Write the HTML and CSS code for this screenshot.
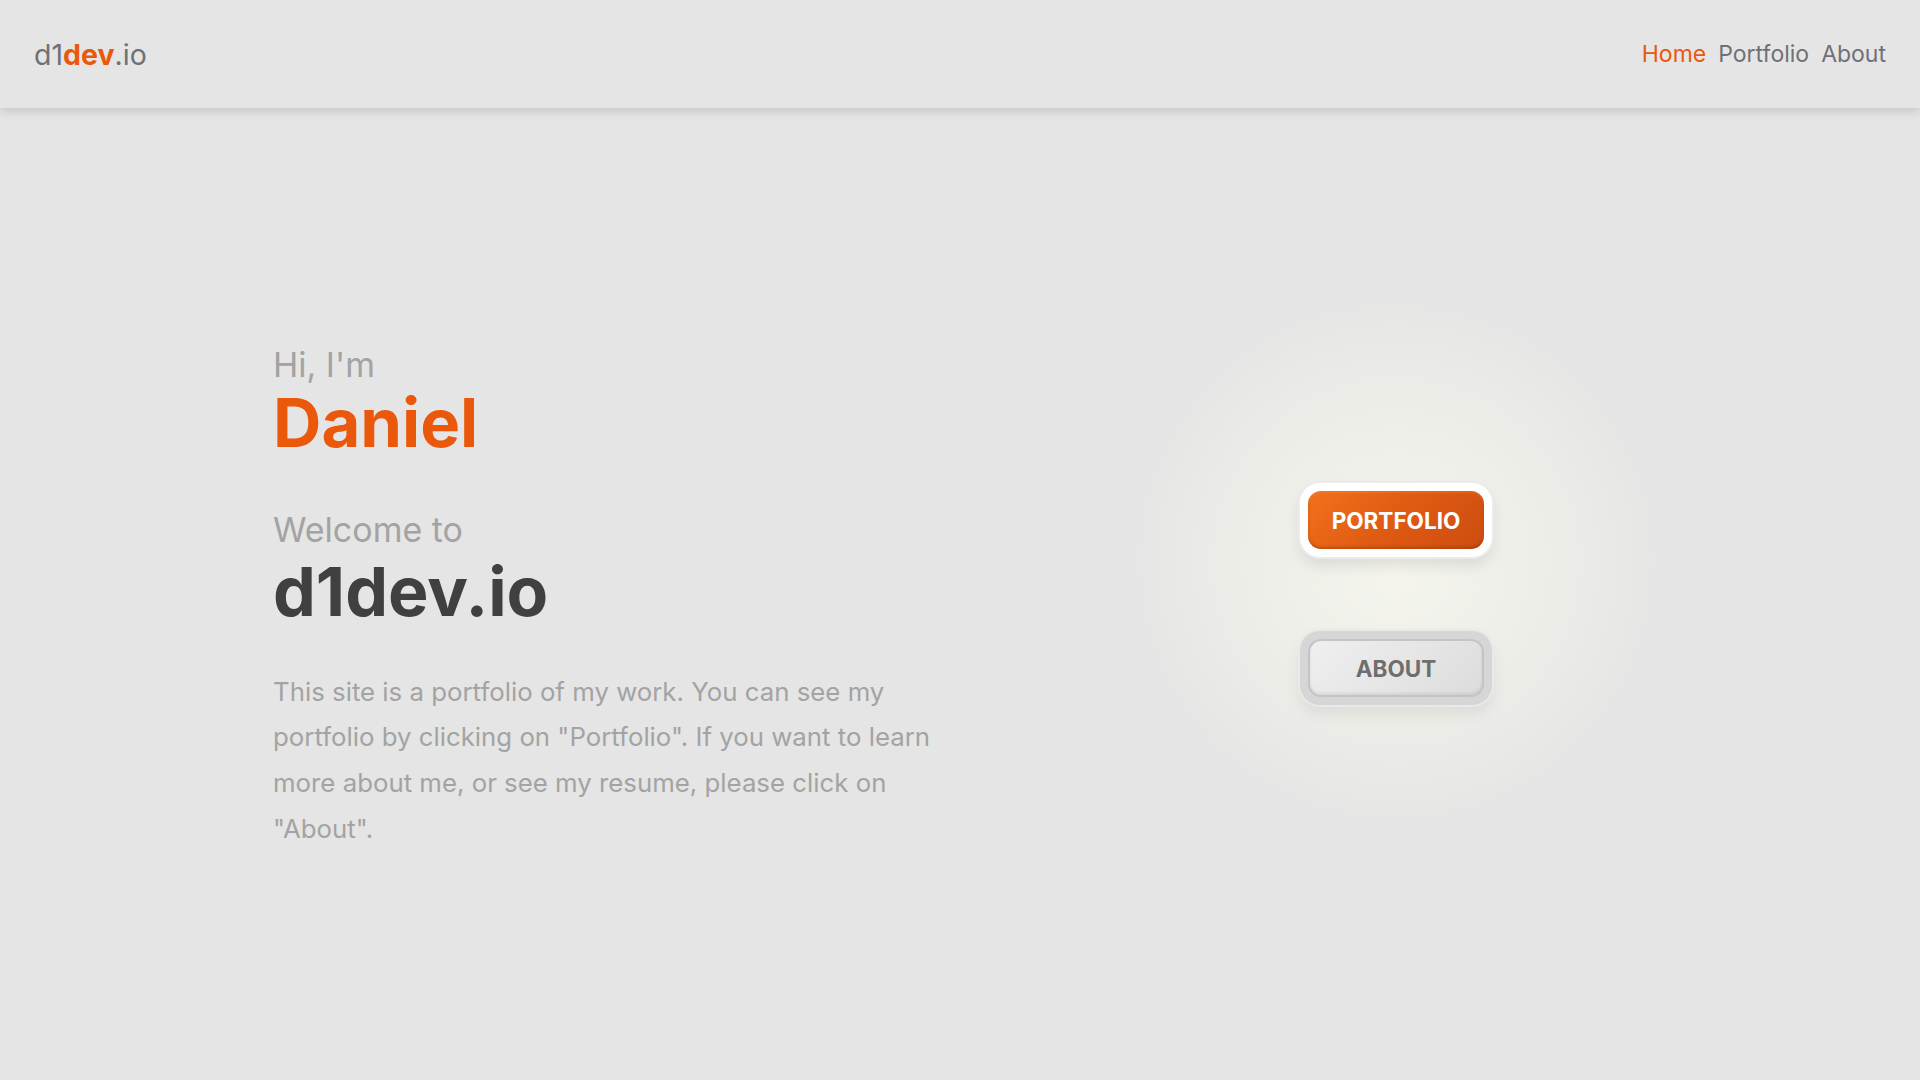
FILE: index.html
```html
<!DOCTYPE html>
<html lang="en">
<head>
<meta charset="utf-8">
<title>d1dev.io</title>
<link rel="stylesheet" href="styles.css">
</head>
<body>
<header class="topbar">
  <a class="logo" href="#">d1<span class="logo-accent">dev</span>.io</a>
  <nav class="nav">
    <a class="nav-link active" href="#">Home</a>
    <a class="nav-link" href="#">Portfolio</a>
    <a class="nav-link" href="#">About</a>
  </nav>
</header>
<main class="hero">
  <section class="intro">
    <p class="greet">Hi, I'm</p>
    <h1 class="name">Daniel</h1>
    <p class="welcome">Welcome to</p>
    <h2 class="site">d1dev.io</h2>
    <p class="desc">This site is a portfolio of my work. You can see my portfolio by clicking on "Portfolio". If you want to learn more about me, or see my resume, please click on "About".</p>
  </section>
  <section class="actions">
    <div class="glow"></div>
    <div class="btn-ring ring-light"><a class="btn btn-primary" href="#">PORTFOLIO</a></div>
    <div class="btn-ring ring-gray"><a class="btn btn-secondary" href="#">ABOUT</a></div>
  </section>
</main>
</body>
</html>
```
FILE: styles.css
```css
* { box-sizing: border-box; }
html, body { margin: 0; padding: 0; }
body {
  background: #e5e5e5;
  font-family: Inter, "Noto Sans", sans-serif;
  width: 1920px;
  height: 1080px;
  overflow: hidden;
}
a { text-decoration: none; }

.topbar {
  height: 108px;
  display: flex;
  align-items: center;
  justify-content: space-between;
  padding: 0 34px;
  background: #e5e5e5;
  box-shadow: 0 4px 8px rgba(0,0,0,0.12);
  position: relative;
  z-index: 2;
}
.logo {
  font-size: 28.5px;
  color: #6f7177;
}
.logo-accent { color: #ea580c; font-weight: 700; }
.nav { display: flex; gap: 12px; }
.nav-link { font-size: 23px; color: #6f7177; }
.nav-link.active { color: #ea580c; }

.hero {
  height: 972px;
  display: flex;
  align-items: center;
  padding: 0 73px 0 273px;
}
.intro { width: 672px; padding-top: 8px; }
.greet {
  margin: 0;
  font-size: 34px;
  line-height: 40px;
  color: #a3a3a3;
}
.name {
  margin: 0;
  font-size: 67px;
  line-height: 76px;
  font-weight: 700;
  color: #ea580c;
}
.welcome {
  margin: 49px 0 0;
  font-size: 34px;
  line-height: 40px;
  color: #a3a3a3;
}
.site {
  margin: 3px 0 0;
  font-size: 68px;
  line-height: 76px;
  font-weight: 700;
  color: #404040;
}
.desc {
  margin: 40px 0 0;
  font-size: 25.8px;
  line-height: 45.6px;
  color: #a3a3a3;
}

.actions {
  flex: 1;
  position: relative;
  display: flex;
  flex-direction: column;
  align-items: center;
  gap: 74px;
}
.glow {
  position: absolute;
  left: 50%;
  top: 50%;
  width: 540px;
  height: 540px;
  transform: translate(-50%, -56%);
  border-radius: 50%;
  background: radial-gradient(circle, rgba(245,245,238,1) 0%, rgba(240,240,233,0.85) 35%, rgba(229,229,229,0) 70%);
  pointer-events: none;
}
.btn-ring {
  position: relative;
  padding: 8px;
  border-radius: 20px;
}
.ring-light {
  background: #ffffff;
  box-shadow: 0 0 0 2px #ebebeb, 0 8px 16px rgba(0,0,0,0.10);
}
.ring-gray {
  background: #d6d6d6;
  box-shadow: 0 0 0 2px #e9e9e9, 0 8px 16px rgba(0,0,0,0.08);
}
.btn {
  display: flex;
  align-items: center;
  justify-content: center;
  width: 176px;
  height: 58px;
  border-radius: 13px;
  font-size: 22.5px;
  font-weight: 700;
}
.btn-primary {
  color: #ffffff;
  background: linear-gradient(135deg, #f2711c 0%, #df5a12 50%, #cc4c10 100%);
  box-shadow: inset 0 -2px 3px rgba(120,40,0,0.35), inset 0 2px 2px rgba(255,150,80,0.25);
}
.btn-secondary {
  color: #6e6e6e;
  background: linear-gradient(135deg, #efefef 0%, #e4e4e4 60%, #dcdcdc 100%);
  border: 2px solid #c4c4c4;
  box-shadow: inset 0 -2px 3px rgba(0,0,0,0.08);
}
```
